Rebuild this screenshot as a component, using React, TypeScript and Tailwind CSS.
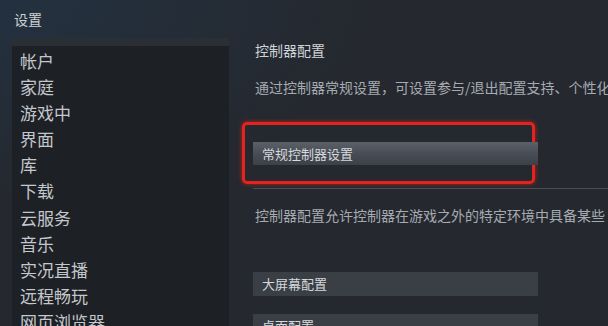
const menu = ['帐户', '家庭', '游戏中', '界面', '库', '下载', '云服务', '音乐', '实况直播', '远程畅玩', '网页浏览器'];

const font = { fontFamily: '"Noto Sans CJK SC", "Liberation Sans", sans-serif' };

export default function App() {
  return (
    <div
      className="w-[608px] h-[326px] overflow-hidden bg-[#25282e] text-[#c6cad0] flex flex-col relative"
      style={font}
    >
      {/* title bar glow */}
      <div className="absolute inset-0 bg-[radial-gradient(ellipse_at_top_left,#233140_0%,transparent_45%)] pointer-events-none" />
      <div className="relative shrink-0 h-[38px] pl-[14px] pt-[9px] text-[14px] leading-[20px] text-[#cdd0d4]">设置</div>
      <div className="relative flex flex-1 min-h-0">
        <div className="ml-[12px] w-[217px] bg-[#1d2025] flex flex-col">
          <div className="shrink-0 h-[8px] bg-[#2a2e35]" />
          <div className="flex flex-col pl-[8px] pt-[2px]">
            {menu.map((m) => (
              <div key={m} className="shrink-0 h-[26.1px] leading-[26px] text-[17px] text-[#c4c7cc] whitespace-nowrap">
                {m}
              </div>
            ))}
          </div>
        </div>
        <div className="flex-1 min-w-0 pl-[13px] pt-[2px] flex flex-col">
          <div className="shrink-0 pl-[13px] text-[14px] leading-[20px] text-[#d0d3d7]">控制器配置</div>
          <div className="shrink-0 pl-[13px] mt-[17px] text-[14px] leading-[20px] text-[#a6abb2] whitespace-nowrap">
            通过控制器常规设置，可设置参与/退出配置支持、个性化
          </div>
          <div className="shrink-0 mt-[25px] w-[293px] h-[62px] border-[3px] border-[#e3231d] rounded-[5px] shadow-[0_0_4px_#c0201a] pt-[17px] pl-[8px]">
            <div className="w-[285px] h-[23px] bg-[linear-gradient(to_bottom,#5a6069,#474c54_55%,#3c4047)] pl-[9px] text-[13px] leading-[23px] text-[#d6d9dc] whitespace-nowrap">
              常规控制器设置
            </div>
          </div>
          <div className="shrink-0 ml-[11px] mt-[4px] h-px bg-[#4a4e55]" />
          <div className="shrink-0 pl-[13px] mt-[16px] text-[14px] leading-[20px] text-[#a6abb2] whitespace-nowrap">
            控制器配置允许控制器在游戏之外的特定环境中具备某些
          </div>
          <div className="shrink-0 ml-[11px] mt-[47px] w-[285px] h-[24px] bg-[#3a3e45] pl-[9px] text-[13px] leading-[24px] text-[#d6d9dc]">
            大屏幕配置
          </div>
          <div className="shrink-0 ml-[11px] mt-[18px] w-[285px] h-[24px] bg-[#3a3e45] pl-[9px] text-[13px] leading-[24px] text-[#d6d9dc]">
            桌面配置
          </div>
        </div>
      </div>
    </div>
  );
}
